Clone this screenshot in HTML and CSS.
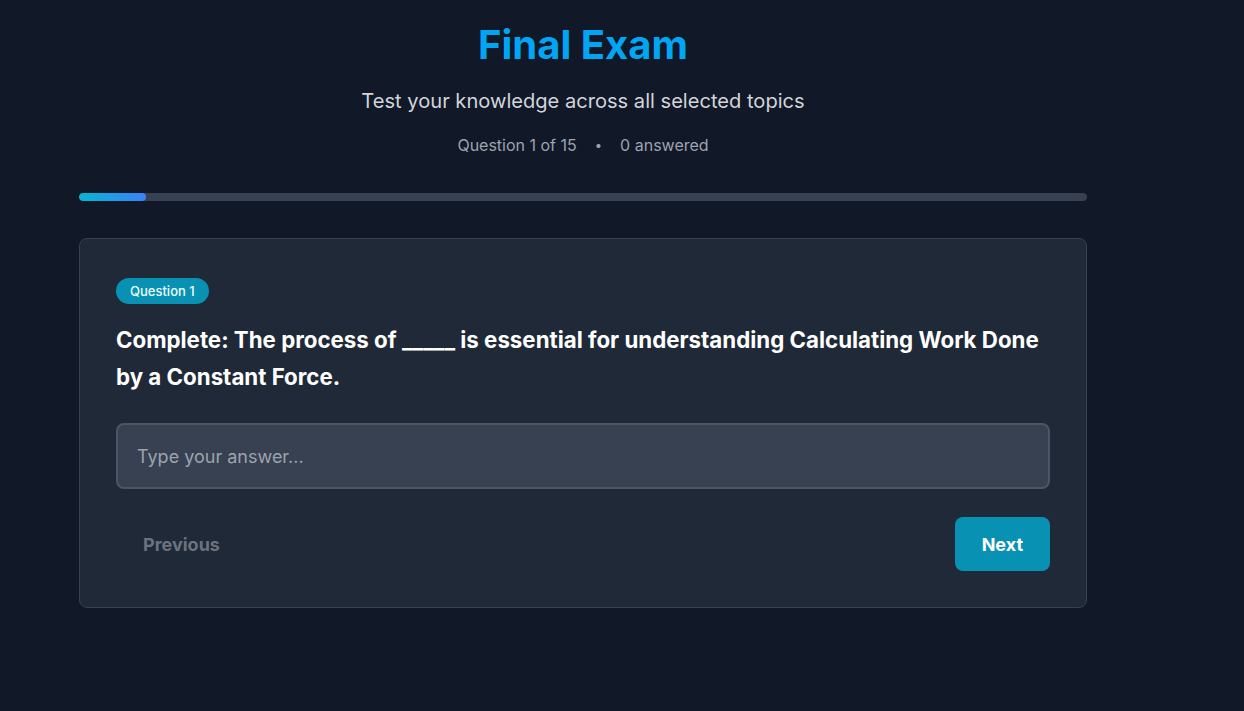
FILE: index.html
```html
<!DOCTYPE html>
<html lang="en">
  <head>
    <meta charset="UTF-8" />
    <meta name="viewport" content="width=device-width, initial-scale=1.0" />
    <title>Final Exam</title>
    <link rel="stylesheet" href="styles.css">
  </head>
  <body>
    <div class="exam">
      <header class="exam-header">
        <h1 class="exam-title">Final Exam</h1>
        <p class="exam-subtitle">Test your knowledge across all selected topics</p>
        <div class="exam-meta">
          <span>Question 1 of 15</span>
          <span class="dot">•</span>
          <span>0 answered</span>
        </div>
      </header>

      <div class="progress">
        <div class="progress-fill" style="width: 6.67%"></div>
      </div>

      <div class="card">
        <span class="badge">Question 1</span>
        <h2 class="question">Complete: The process of _____ is essential for understanding Calculating Work Done by a Constant Force.</h2>
        <input class="answer" type="text" placeholder="Type your answer..." />
        <div class="actions">
          <button class="btn btn-prev">Previous</button>
          <button class="btn btn-next">Next</button>
        </div>
      </div>
    </div>
  </body>
</html>
```

FILE: styles.css
```css
* {
  margin: 0;
  padding: 0;
  box-sizing: border-box;
}

body {
  background-color: #111827;
  font-family: Inter, "Noto Sans", sans-serif;
  color: #f9fafb;
  height: 100vh;
}

.exam {
  width: 1008px;
  margin-left: 79px;
}

.exam-header {
  text-align: center;
  padding-top: 21px;
}

.exam-title {
  font-size: 40px;
  line-height: 48px;
  font-weight: 700;
  color: #00a6f4;
}

.exam-subtitle {
  margin-top: 18px;
  font-size: 20.1px;
  line-height: 28px;
  color: #d1d5db;
}

.exam-meta {
  margin-top: 18px;
  display: flex;
  justify-content: center;
  gap: 18px;
  font-size: 16px;
  line-height: 24px;
  color: #9ca3af;
}

.dot {
  font-size: 13px;
}

.progress {
  margin-top: 36px;
  height: 8px;
  border-radius: 999px;
  background-color: #374151;
  overflow: hidden;
}

.progress-fill {
  height: 100%;
  border-radius: 999px;
  background: linear-gradient(to right, #06b6d4, #3b82f6);
}

.card {
  margin-top: 37px;
  background-color: #1f2937;
  border: 1px solid #374151;
  border-radius: 8px;
  padding: 39px 36px 36px;
}

.badge {
  display: inline-block;
  background-color: #0891b2;
  color: #ecfeff;
  font-size: 13px;
  font-weight: 500;
  line-height: 18px;
  padding: 4px 14px;
  border-radius: 999px;
}

.question {
  margin-top: 17px;
  font-size: 22.3px;
  line-height: 37px;
  font-weight: 700;
  color: #ffffff;
}

.answer {
  display: block;
  width: 100%;
  height: 66px;
  margin-top: 28px;
  padding: 0 19px;
  background-color: #374151;
  border: 2px solid #4b5563;
  border-radius: 8px;
  font-family: inherit;
  font-size: 18px;
  color: #f9fafb;
  outline: none;
}

.answer::placeholder {
  color: #9ca3af;
}

.actions {
  margin-top: 28px;
  display: flex;
  justify-content: space-between;
}

.btn {
  height: 54px;
  padding: 0 27px;
  border: none;
  border-radius: 8px;
  font-family: inherit;
  font-size: 18px;
  font-weight: 700;
  cursor: pointer;
}

.btn-prev {
  background: none;
  color: #6b7280;
}

.btn-next {
  background-color: #0891b2;
  color: #ffffff;
}
```
